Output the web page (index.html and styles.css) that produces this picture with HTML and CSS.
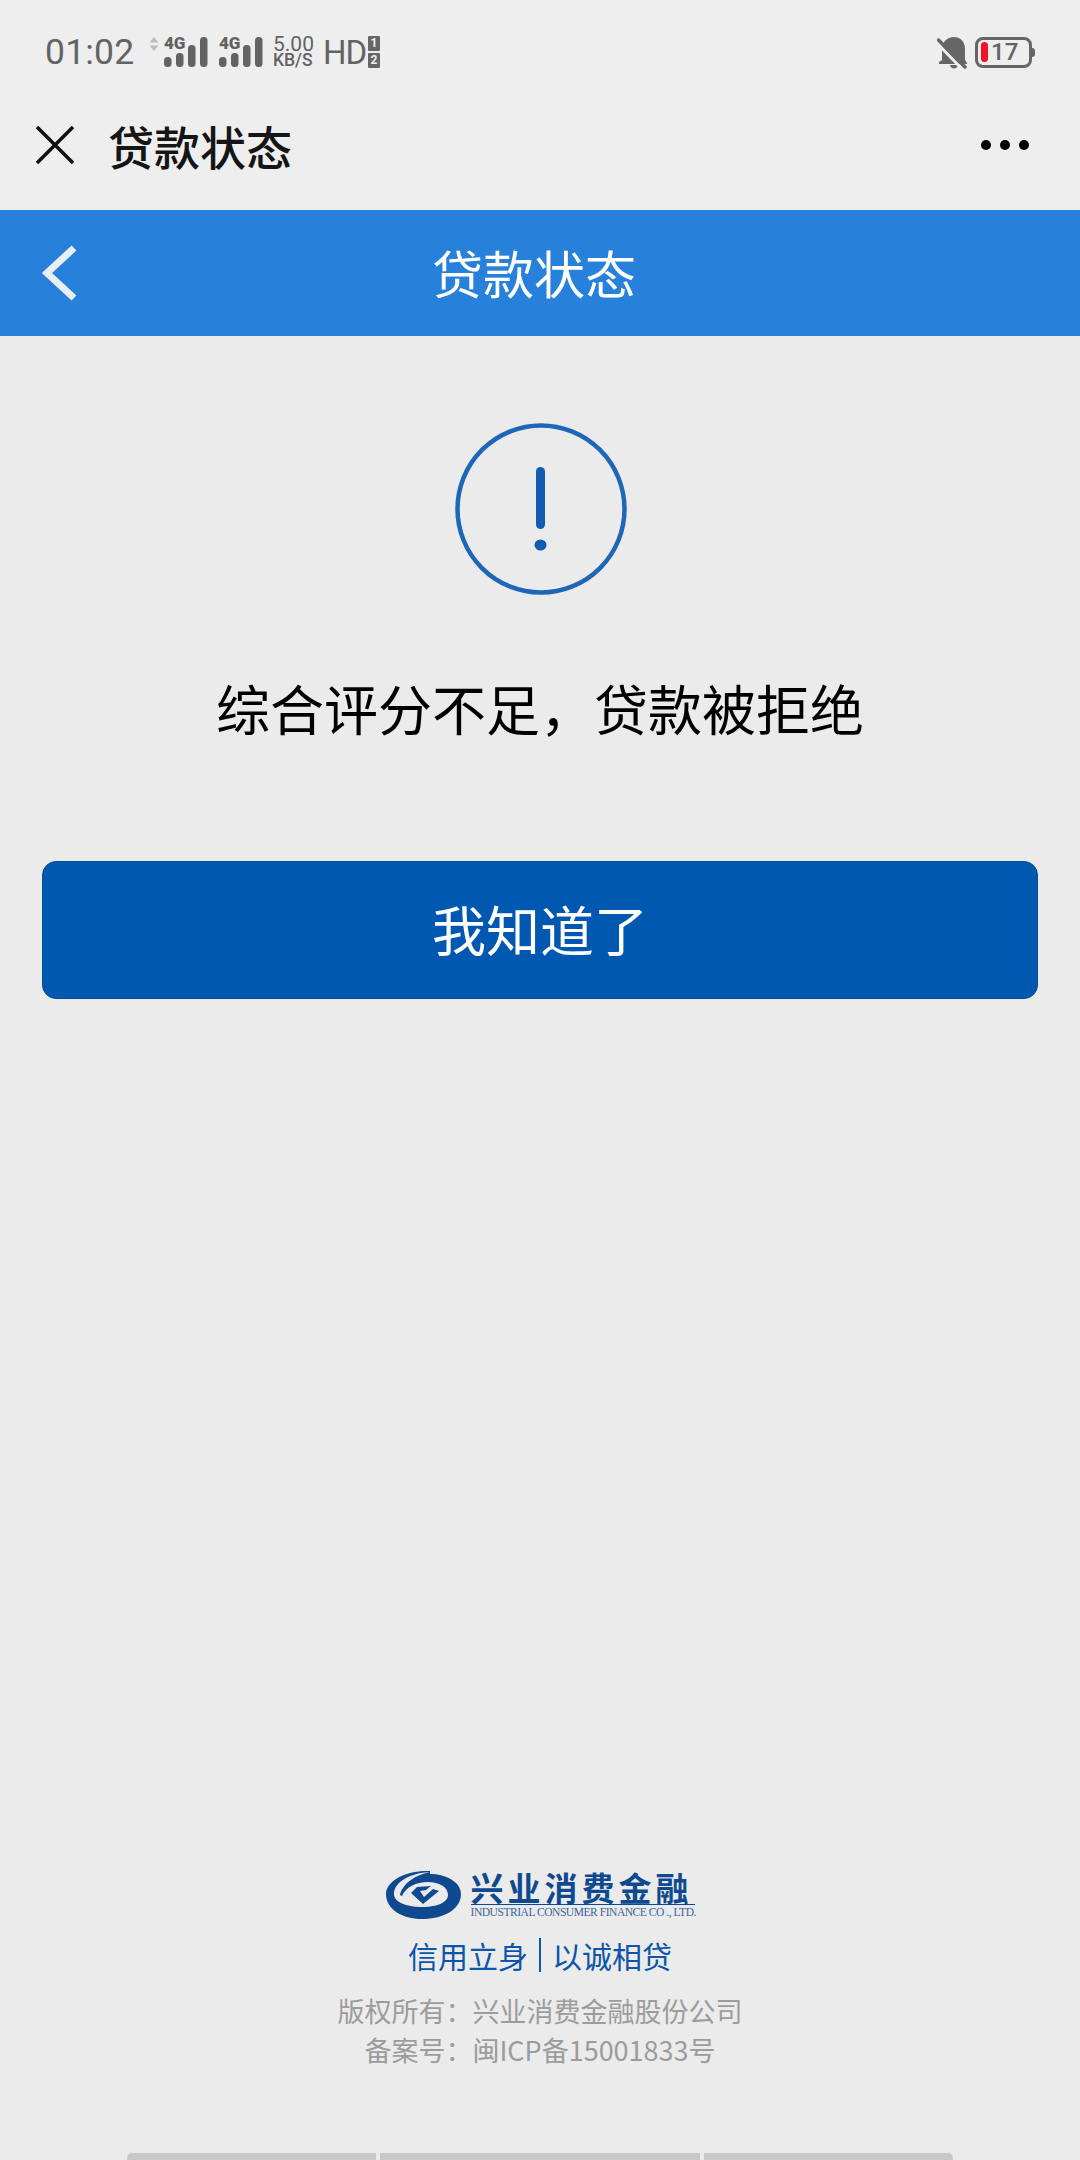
FILE: index.html
```html
<!DOCTYPE html>
<html lang="zh-CN">

<head>
    <meta charset="UTF-8">
    <meta name="viewport" content="width=device-width, initial-scale=1.0">
    <title>贷款状态</title>
    <link rel="stylesheet" href="styles.css">
</head>

<body>
    <div class="phone">
        <div class="status-bar">
            <span class="time">01:02</span>
            <svg class="arrows" width="10" height="14" viewBox="0 0 10 14">
                <path d="M5 0l4.500 5.500h-9zM5 14l4.500-5.500h-9z" fill="#bcbcbc" />
            </svg>
            <svg class="signal" width="44" height="32" viewBox="0 0 44 32">
                <text x="0" y="13" class="signal-text">4G</text>
                <rect x="0" y="21" width="7.500" height="10" rx="3.500" />
                <rect x="12" y="17" width="7.500" height="14" rx="3.500" />
                <rect x="24" y="9" width="7.500" height="22" rx="3.500" />
                <rect x="36" y="1" width="7.500" height="30" rx="3.500" />
            </svg>
            <svg class="signal signal-two" width="44" height="32" viewBox="0 0 44 32">
                <text x="0" y="13" class="signal-text">4G</text>
                <rect x="0" y="21" width="7.500" height="10" rx="3.500" />
                <rect x="12" y="17" width="7.500" height="14" rx="3.500" />
                <rect x="24" y="9" width="7.500" height="22" rx="3.500" />
                <rect x="36" y="1" width="7.500" height="30" rx="3.500" />
            </svg>
            <div class="speed">
                <span class="speed-num">5.00</span>
                <span class="speed-unit">KB/S</span>
            </div>
            <span class="hd">HD</span>
            <div class="sims">
                <span class="sim">1</span>
                <span class="sim">2</span>
            </div>
            <svg class="bell" width="30" height="33" viewBox="0 0 30 33">
                <path d="M5 14C5 6 10 1 17 1s11 5 11 12v11l2 3v1H2v-2l3-2z" fill="#666" />
                <path d="M13 29h8c0 2-2 3.500-4 3.500s-4-1.500-4-3.500z" fill="#666" />
                <path d="M-1 6l27 28" stroke="#eee" stroke-width="3" />
                <path d="M1.500 4L28 31" stroke="#666" stroke-width="3.500" stroke-linecap="round" />
            </svg>
            <div class="battery">
                <span class="battery-level"></span>
                <span class="battery-num">17</span>
            </div>
            <span class="battery-tip"></span>
        </div>

        <div class="title-bar">
            <svg class="close-icon" width="38" height="38" viewBox="0 0 38 38">
                <path d="M1 1l36 36M37 1L1 37" stroke="#111" stroke-width="3.500" fill="none" />
            </svg>
            <h1 class="app-title">贷款状态</h1>
            <div class="more-dots">
                <span></span>
                <span></span>
                <span></span>
            </div>
        </div>

        <div class="page-header">
            <svg class="back-icon" width="36" height="56" viewBox="0 0 36 56">
                <path d="M32 3L5 28l27 25" stroke="#e9eef4" stroke-width="7" fill="none" />
            </svg>
            <span class="page-title">贷款状态</span>
        </div>

        <div class="result">
            <svg class="alert-icon" width="172" height="172" viewBox="0 0 172 172">
                <circle cx="86" cy="86" r="83.500" fill="none" stroke="#1d66b8" stroke-width="4.500" />
                <rect x="81" y="44" width="9" height="62" rx="4.500" fill="#0f5cb2" />
                <ellipse cx="85.500" cy="122" rx="6" ry="5.500" fill="#0f5cb2" />
            </svg>
            <p class="result-text">综合评分不足，贷款被拒绝</p>
            <button class="ok-button">我知道了</button>
        </div>

        <div class="footer">
            <div class="logo">
                <svg class="logo-mark" width="76" height="50" viewBox="0 0 76 50">
                    <path fill="#0f4a90" d="M44 1C20 0 0 11 0 24c0 15 16 25 36 25 22 0 39-10 39-25C75 12 60 4 44 4z" />
                    <path fill="#ebebeb" d="M44 2C24 3 8 12 8 24c0 8 12 13 28 13 16 0 26-5 26-12 0-8-9-13-20-13-12 0-22 5-26 14-1 0-2-1-2-2C18 12 30 5 44 2z" />
                    <path fill="#0f4a90" d="M31 17l14-1-5 4-6 1 4 6 9-8 6 2-16 13-12-11z" />
                </svg>
                <div class="logo-words">
                    <div class="logo-cn">兴业消费金融</div>
                    <div class="logo-en">INDUSTRIAL CONSUMER FINANCE CO ., LTD.</div>
                </div>
            </div>
            <div class="slogan">信用立身<span class="slogan-bar"></span>以诚相贷</div>
            <div class="copyright">版权所有：兴业消费金融股份公司</div>
            <div class="copyright">备案号：闽ICP备15001833号</div>
        </div>

        <div class="bottom-keys">
            <span class="key key-left"></span>
            <span class="key key-mid"></span>
            <span class="key key-right"></span>
        </div>
    </div>
</body>

</html>
```

FILE: styles.css
```css
* {
    box-sizing: border-box;
}

body {
    margin: 0;
    font-family: "Noto Sans CJK SC", "Noto Sans", sans-serif;
    background-color: #ebebeb;
}

.phone {
    width: 1080px;
    height: 2160px;
    display: flex;
    flex-direction: column;
    overflow: hidden;
}

/* status bar */
.status-bar {
    height: 100px;
    padding: 4px 0 0 45px;
    display: flex;
    align-items: center;
    background-color: #eee;
    color: #636363;
    font-family: Roboto, sans-serif;
}

.time {
    font-size: 35.500px;
    width: 104px;
    letter-spacing: 0.2px;
}

.arrows {
    margin: -16px 5px 0 0;
}

.signal {
    fill: #636363;
    overflow: visible;
}

.signal-two {
    margin-left: 11px;
}

.signal-text {
    font-family: Roboto, sans-serif;
    font-weight: 900;
    font-size: 17px;
}

.speed {
    margin-left: 10px;
    width: 50px;
    display: flex;
    flex-direction: column;
    line-height: 16px;
}

.speed-num {
    font-size: 21px;
}

.speed-unit {
    font-size: 17.500px;
    font-weight: 500;
}

.hd {
    font-size: 33px;
    width: 45px;
    letter-spacing: -1px;
}

.sims {
    display: flex;
    flex-direction: column;
    gap: 2px;
    width: 12px;
}

.sim {
    height: 15px;
    background-color: #666;
    color: #eee;
    font-size: 12px;
    font-weight: 700;
    line-height: 15px;
    text-align: center;
    border-radius: 1px;
}

.bell {
    margin-left: auto;
}

.battery {
    margin-left: 8px;
    width: 57px;
    height: 31px;
    border: 3px solid #666;
    border-radius: 8px;
    display: flex;
    align-items: center;
    padding-left: 3px;
}

.battery-level {
    width: 7px;
    height: 20px;
    background-color: #f3102a;
    border-radius: 4px;
}

.battery-num {
    font-size: 24px;
    font-weight: 500;
    margin-left: 3px;
}

.battery-tip {
    width: 3px;
    height: 9px;
    background-color: #666;
    border-radius: 0 3px 3px 0;
    margin-right: 45px;
}

/* app title bar */
.title-bar {
    height: 110px;
    padding: 0 51px 21px 36px;
    display: flex;
    align-items: center;
    background-color: #eee;
}

.close-icon {
    margin-right: 34px;
}

.app-title {
    margin: 0;
    font-size: 46px;
    font-weight: 500;
    color: #151515;
}

.more-dots {
    margin-left: auto;
    display: flex;
    gap: 9px;
}

.more-dots span {
    width: 10px;
    height: 10px;
    border-radius: 50%;
    background-color: #000;
}

/* blue header */
.page-header {
    height: 126px;
    padding: 0 0 2px 42px;
    display: flex;
    align-items: center;
    background-color: #2781da;
}

.back-icon {
    margin: 2px 354px 0 0;
}

.page-title {
    font-size: 51px;
    color: #fff;
}

/* result */
.result {
    padding: 87px 42px 0;
    display: flex;
    flex-direction: column;
    align-items: center;
}

.alert-icon {
    margin-left: 2px;
}

.result-text {
    margin: 73px 0 0;
    font-size: 54px;
    line-height: 80px;
    color: #000;
}

.ok-button {
    margin-top: 113px;
    width: 996px;
    height: 138px;
    padding: 0 0 4px;
    background-color: #0058b0;
    border: 1px solid #0b4d95;
    border-radius: 14px;
    color: #fff;
    font-family: inherit;
    font-size: 54px;
}

/* footer */
.footer {
    margin-top: auto;
    display: flex;
    flex-direction: column;
    align-items: center;
}

.logo {
    display: flex;
    align-items: flex-start;
}

.logo-mark {
    margin-right: 9px;
}

.logo-words {
    width: 224px;
}

.logo-cn {
    font-size: 33px;
    font-weight: 700;
    line-height: 34px;
    letter-spacing: 4px;
    color: #0f4a90;
    border-bottom: 1.500px solid #0f4a90;
    white-space: nowrap;
}

.logo-en {
    font-family: "Liberation Serif", serif;
    font-size: 11.500px;
    line-height: 15px;
    letter-spacing: -0.45px;
    color: #3a659b;
    white-space: nowrap;
}

.slogan {
    margin: 13px 0 14px;
    display: flex;
    align-items: center;
    font-size: 30px;
    line-height: 44px;
    color: #0d55a8;
}

.slogan-bar {
    width: 2px;
    height: 34px;
    margin: 0 11px;
    background-color: #0d55a8;
}

.copyright {
    font-size: 27px;
    line-height: 39px;
    color: #9c9c9c;
}

.bottom-keys {
    margin-top: 84px;
    height: 7px;
    padding: 0 127px;
    display: flex;
    gap: 4px;
}

.key {
    background-color: #c8c8c8;
}

.key-left {
    width: 250px;
    border-radius: 5px 0 0 0;
}

.key-mid {
    width: 320px;
}

.key-right {
    width: 250px;
    border-radius: 0 5px 0 0;
}
```
